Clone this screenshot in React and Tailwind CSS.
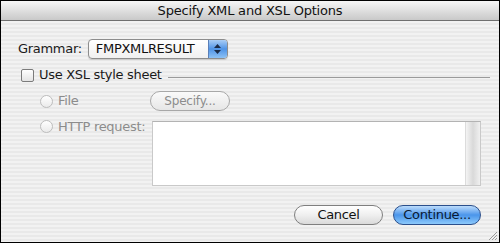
export default function App() {
  const font = { fontFamily: '"DejaVu Sans", "Liberation Sans", sans-serif' };
  return (
    <div className="w-[500px] h-[243px] overflow-hidden bg-black" style={font}>
      <div className="w-[500px] h-[243px] border border-black flex flex-col bg-[repeating-linear-gradient(180deg,#f2f2f2_0px,#f2f2f2_2px,#e9e9e9_2px,#e9e9e9_4px)]">
        {/* title bar */}
        <div className="h-[20px] shrink-0 flex items-center justify-center bg-gradient-to-b from-[#f6f6f6] to-[#c9c9c9] border-b border-[#6f6f6f] text-[13px] text-[#111] tracking-[-0.2px]">
          Specify XML and XSL Options
        </div>

        <div className="relative flex-1 flex flex-col pl-[17px] pr-[9px]">
          {/* grammar */}
          <div className="mt-[18px] flex items-center h-[20px]">
            <span className="text-[13px] text-[#1a1a1a] tracking-[-0.3px]">Grammar:</span>
            <div className="ml-[6px] w-[140px] h-[20px] flex rounded-[4px] border border-[#8d8d8d] bg-gradient-to-b from-white to-[#f0f0f0] shadow-[0_1px_1px_rgba(0,0,0,0.15)] overflow-hidden">
              <span className="flex-1 pl-[7px] text-[13px] leading-[18px] text-[#111] tracking-[-0.3px]">FMPXMLRESULT</span>
              <div className="w-[19px] h-full flex flex-col items-center justify-center gap-[2px] border-l border-[#5a7fb8] bg-gradient-to-b from-[#a9cdf5] via-[#4e93e6] to-[#8ec2f5]">
                <svg width="7" height="4" viewBox="0 0 7 4"><path d="M0 4 L3.5 0 L7 4 Z" fill="#1b2c48" /></svg>
                <svg width="7" height="4" viewBox="0 0 7 4"><path d="M0 0 L3.5 4 L7 0 Z" fill="#1b2c48" /></svg>
              </div>
            </div>
          </div>

          {/* xsl checkbox */}
          <div className="mt-[9px] flex items-center h-[14px]">
            <div className="ml-[3px] w-[13px] h-[13px] rounded-[2px] border border-[#7b7b7b] bg-gradient-to-b from-white to-[#e4e4e4]" />
            <span className="ml-[5px] text-[13px] text-[#1a1a1a] tracking-[-0.3px]">Use XSL style sheet</span>
            <div className="ml-[6px] flex-1 mt-[6px] h-[2px] border-t border-[#9a9a9a] border-b-white" />
          </div>

          {/* file radio */}
          <div className="mt-[9px] flex items-center h-[20px]">
            <div className="ml-[22px] w-[13px] h-[13px] rounded-full border border-[#bdbdbd] bg-gradient-to-b from-white to-[#eaeaea]" />
            <span className="ml-[5px] w-[92px] text-[13px] text-[#8c8c8c] tracking-[-0.3px]">File</span>
            <div className="w-[80px] h-[20px] rounded-full border border-[#a8a8a8] bg-gradient-to-b from-[#fafafa] to-[#e6e6e6] flex items-center justify-center text-[12px] text-[#8c8c8c] tracking-[-0.2px]">
              Specify...
            </div>
          </div>

          {/* http radio */}
          <div className="mt-[9px] flex items-start">
            <div className="ml-[22px] w-[13px] h-[13px] rounded-full border border-[#bdbdbd] bg-gradient-to-b from-white to-[#eaeaea]" />
            <span className="ml-[5px] w-[94px] text-[13px] leading-[13px] text-[#8c8c8c] tracking-[-0.3px]">HTTP request:</span>
            <div className="mt-[1px] w-[329px] h-[65px] flex bg-white border border-[#c9c9c9] border-t-[#b3b3b3]">
              <div className="flex-1" />
              <div className="w-[15px] h-full bg-gradient-to-r from-[#f4f4f4] via-[#d9d9d9] to-[#f0f0f0] border-l border-[#dcdcdc]" />
            </div>
          </div>

          {/* buttons */}
          <div className="mt-[19px] flex justify-end gap-[10px] pr-[9px]">
            <div className="w-[89px] h-[20px] rounded-full border border-[#7f7f7f] bg-gradient-to-b from-white via-[#efefef] to-[#dadada] flex items-center justify-center text-[13px] text-[#111] tracking-[-0.3px]">
              Cancel
            </div>
            <div className="w-[88px] h-[20px] rounded-full border border-[#2b4f8c] bg-gradient-to-b from-[#bcdcfb] via-[#4a95ea] to-[#8cc9fb] flex items-center justify-center text-[13px] text-[#0a1a33] tracking-[-0.3px]">
              Continue...
            </div>
          </div>

          {/* resize grip */}
          <svg className="absolute right-[1px] bottom-[1px]" width="11" height="11" viewBox="0 0 11 11">
            <path d="M10 2 L2 10 M10 5 L5 10 M10 8 L8 10" stroke="#9a9a9a" strokeWidth="1" />
          </svg>
        </div>
      </div>
    </div>
  );
}
